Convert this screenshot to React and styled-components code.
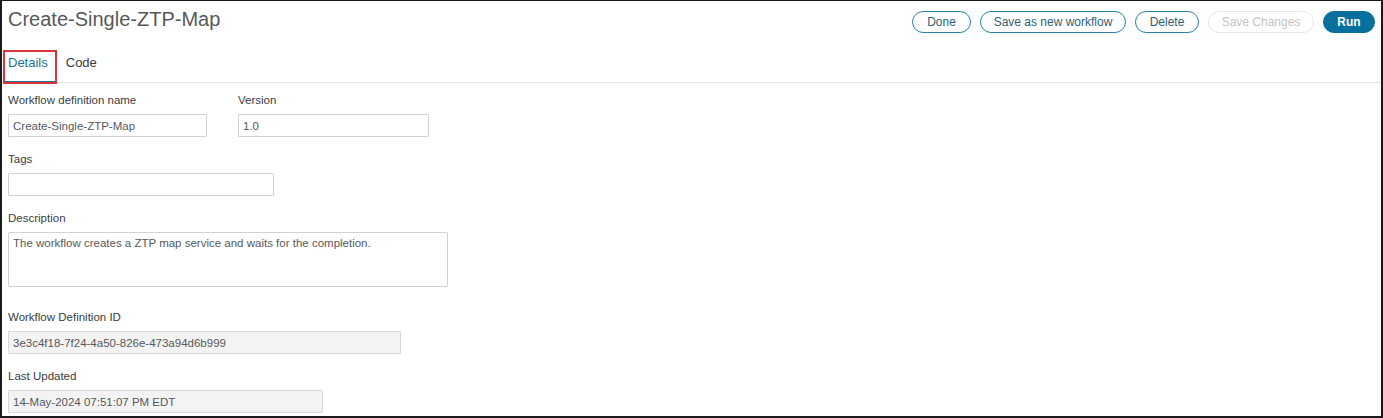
import React from 'react'
import styled, { createGlobalStyle } from 'styled-components'

const Global = createGlobalStyle`
  html, body { margin: 0; padding: 0; background: #fff; }
  body { font-family: "Liberation Sans", Arial, sans-serif; }
`

const Frame = styled.div`
  box-sizing: border-box;
  width: 1383px;
  height: 418px;
  border-style: solid;
  border-color: #1a1a1a;
  border-width: 1px 2px 2px 2px;
  background: #fff;
  overflow: hidden;
`

const Header = styled.div`
  display: flex;
  justify-content: space-between;
  align-items: flex-start;
  padding: 0 6px 0 6px;
  height: 43px;
`

const Title = styled.h1`
  margin: 0;
  padding-top: 6px;
  font-size: 20px;
  line-height: 24px;
  font-weight: normal;
  color: #58585b;
`

const Actions = styled.div`
  display: flex;
  gap: 9px;
  margin-top: 10px;
`

const Button = styled.button`
  box-sizing: border-box;
  height: 22px;
  width: ${p => p.$w}px;
  padding: 0;
  border-radius: 11px;
  font-family: inherit;
  font-size: 12px;
  cursor: pointer;
  border: 1px solid ${p => (p.$primary ? '#07709d' : p.disabled ? '#e6e6e6' : '#2b82a5')};
  background: ${p => (p.$primary ? '#07709d' : '#fff')};
  color: ${p => (p.$primary ? '#fff' : p.disabled ? '#c4c4c4' : '#2c5f77')};
  font-weight: ${p => (p.$primary ? 'bold' : 'normal')};
`

const TabBar = styled.div`
  display: flex;
  gap: 8px;
  padding-left: 3px;
  border-bottom: 1px solid #e3e3e3;
`

const Tab = styled.div`
  position: relative;
  padding: 11px 7px 10px 3px;
  margin-bottom: -1px;
  font-size: 13px;
  line-height: 16px;
  color: ${p => (p.$active ? '#1a7394' : '#3a3a3c')};
  border-bottom: 2px solid ${p => (p.$active ? '#1a7394' : 'transparent')};
`

const Highlight = styled.span`
  position: absolute;
  left: -2px;
  right: -2px;
  top: 6px;
  bottom: -3px;
  border: 2px solid #d8343c;
  pointer-events: none;
`

const Form = styled.div`
  padding: 9px 0 0 6px;
`

const Row = styled.div`
  display: flex;
  gap: 31px;
`

const Field = styled.div`
  display: flex;
  flex-direction: column;
  width: ${p => p.$w}px;
  margin-top: ${p => p.$top ?? 14}px;
`

const Label = styled.label`
  font-size: 11.5px;
  line-height: 16px;
  margin-bottom: 6px;
  color: #3c3c3e;
`

const Input = styled.input`
  box-sizing: border-box;
  height: 23px;
  width: 100%;
  margin: 0;
  padding: 0 4px;
  border: 1px solid ${p => (p.readOnly ? '#d8d8d8' : '#d2d2d2')};
  border-radius: 1px;
  background: ${p => (p.readOnly ? '#f3f3f3' : '#fff')};
  font-family: inherit;
  font-size: 11.5px;
  color: #58585b;
  outline: none;
`

const TextArea = styled.textarea`
  display: block;
  box-sizing: border-box;
  height: 55px;
  width: 100%;
  margin: 0;
  padding: 3px 4px;
  border: 1px solid #d2d2d2;
  border-radius: 1px;
  resize: none;
  font-family: inherit;
  font-size: 11.5px;
  line-height: 15px;
  color: #58585b;
  outline: none;
`

export default function App() {
  return (
    <>
      <Global />
      <Frame>
        <Header>
          <Title>Create-Single-ZTP-Map</Title>
          <Actions>
            <Button $w={59}>Done</Button>
            <Button $w={146}>Save as new workflow</Button>
            <Button $w={64}>Delete</Button>
            <Button $w={106} disabled>Save Changes</Button>
            <Button $w={52} $primary>Run</Button>
          </Actions>
        </Header>

        <TabBar>
          <Tab $active>
            Details
            <Highlight />
          </Tab>
          <Tab>Code</Tab>
        </TabBar>

        <Form>
          <Row>
            <Field $w={199} $top={0}>
              <Label>Workflow definition name</Label>
              <Input defaultValue="Create-Single-ZTP-Map" />
            </Field>
            <Field $w={191} $top={0}>
              <Label>Version</Label>
              <Input defaultValue="1.0" />
            </Field>
          </Row>
          <Field $w={266}>
            <Label>Tags</Label>
            <Input />
          </Field>
          <Field $w={440}>
            <Label>Description</Label>
            <TextArea defaultValue="The workflow creates a ZTP map service and waits for the completion." />
          </Field>
          <Field $w={393} $top={22}>
            <Label>Workflow Definition ID</Label>
            <Input readOnly defaultValue="3e3c4f18-7f24-4a50-826e-473a94d6b999" />
          </Field>
          <Field $w={315}>
            <Label>Last Updated</Label>
            <Input readOnly defaultValue="14-May-2024 07:51:07 PM EDT" />
          </Field>
        </Form>
      </Frame>
    </>
  )
}
